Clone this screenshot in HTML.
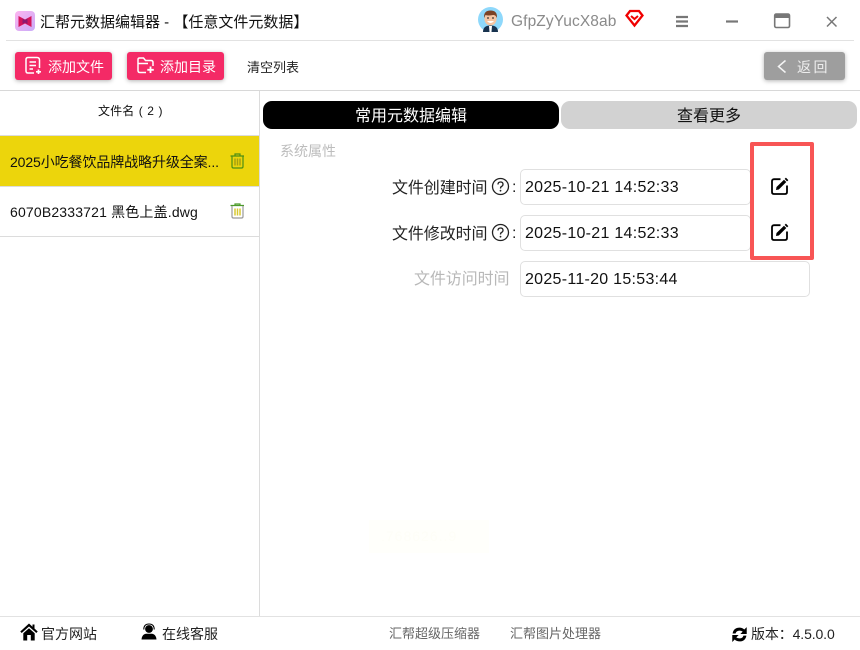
<!DOCTYPE html>
<html lang="zh">
<head>
<meta charset="utf-8">
<style>
*{box-sizing:border-box;margin:0;padding:0}
html,body{width:860px;height:650px;overflow:hidden;background:#fff}
body{position:relative;font-family:"Liberation Sans","Noto Sans CJK SC",sans-serif;color:#111}
.a{position:absolute;white-space:nowrap;line-height:20px}
.line{position:absolute;background:#dcdcdc}
.btn{position:absolute;top:52px;height:28px;background:#f42a66;border-radius:3px;box-shadow:0 1px 4px rgba(0,0,0,.3);color:#fff;font-size:14px;line-height:30px}
.btn span{position:absolute;left:33px;white-space:nowrap}
.btn svg{position:absolute;left:9px;top:4px}
.input{position:absolute;left:520px;height:36px;border:1px solid #e0e0e0;border-radius:5px;font-size:16px;line-height:36px;padding-left:4px;color:#111;background:#fff;letter-spacing:.28px}
</style>
</head>
<body>
<!-- title bar -->
<svg class="a" style="left:15px;top:11px" width="20" height="20" viewBox="0 0 20 20">
<defs><linearGradient id="g" x1="0" y1="0" x2="1" y2="1"><stop offset="0" stop-color="#fdb4f0"/><stop offset="1" stop-color="#c9abf8"/></linearGradient></defs>
<rect width="20" height="20" rx="4" fill="url(#g)"/>
<path d="M3.500 5L10 8.500L16.500 5V16L10 12.500L3.500 16Z" fill="#d4145a"/>
<path d="M7.500 7.500L10 9L12.500 7.500V13L10 11.500L7.500 13Z" fill="#8a1a70"/>
</svg>
<div class="a" style="left:40px;top:13px;font-size:15px;color:#111">汇帮元数据编辑器 - 【任意文件元数据】</div>

<svg class="a" style="left:478px;top:7px" width="25" height="25" viewBox="0 0 25 25">
<circle cx="12.500" cy="12.500" r="12.500" fill="#8ed8fb"/>
<path d="M5 25Q5 18.500 12.500 18.500T20 25Z" fill="#17324f"/>
<path d="M11 19h3l-.5 6h-2z" fill="#fff"/>
<ellipse cx="12.500" cy="12" rx="6" ry="6.500" fill="#f5c5a3"/>
<path d="M6 11Q5.500 3.500 12.500 3.500T19 11Q17.500 7.500 15 8Q10 9 7.500 8Z" fill="#7a4326"/>
<path d="M9 14Q12.500 18 16 14Z" fill="#fff"/>
<circle cx="10" cy="11" r=".9" fill="#333"/><circle cx="15" cy="11" r=".9" fill="#333"/>
</svg>
<div class="a" style="left:511px;top:12px;font-size:15.500px;color:#8a8a8a;letter-spacing:.1px">GfpZyYucX8ab</div>
<svg class="a" style="left:625px;top:9px" width="19" height="19" viewBox="0 0 19 19">
<path d="M5 2H14L17.500 6.500L9.500 16.500L1.500 6.500Z" fill="none" stroke="#f00000" stroke-width="2.300"/>
<path d="M6 7L9.500 10L13 7" fill="none" stroke="#f00000" stroke-width="2"/>
</svg>
<svg class="a" style="left:675px;top:15px" width="14" height="13"><path d="M1 2H13M1 6.500H13M1 11H13" stroke="#777" stroke-width="2.200"/></svg>
<svg class="a" style="left:725px;top:15px" width="14" height="13"><path d="M1 6.500H13" stroke="#777" stroke-width="2.200"/></svg>
<svg class="a" style="left:773px;top:13px" width="18" height="16" viewBox="0 0 18 16"><rect x="1.700" y="1" width="14.800" height="13.500" rx="1.500" fill="#fff" stroke="#777" stroke-width="1.600"/><rect x="1.500" y="1" width="15" height="4" fill="#777"/></svg>
<svg class="a" style="left:825px;top:15px" width="13" height="13"><path d="M2 2L11.500 11.500M11.500 2L2 11.500" stroke="#777" stroke-width="1.500"/></svg>

<div class="line" style="left:6px;top:40px;width:848px;height:1px;background:#e2e2e2"></div>

<!-- toolbar -->
<div class="btn" style="left:15px;width:97px">
<svg width="20" height="20" viewBox="0 0 20 20" fill="none" stroke="#fff" stroke-width="1.500"><path d="M10 17H4Q2 17 2 15V3.500Q2 1.500 4 1.500H13Q15.500 1.500 15.500 4V12"/><path d="M5.500 6H12M5.500 9.500H12M5.500 13H9"/><path d="M14.500 13.500V18M12 15.800H17" stroke-width="1.700"/></svg>
<span>添加文件</span></div>
<div class="btn" style="left:127px;width:97px">
<svg width="20" height="20" viewBox="0 0 20 20" fill="none" stroke="#fff" stroke-width="1.500"><path d="M10 16.500H4Q2 16.500 2 14.500V3.500Q2 2 3.500 2H7.500L9.500 4.500H15Q17 4.500 17 6.500V10"/><path d="M2 7.500H12"/><path d="M14.500 10.500V17M11.300 13.800H17.800" stroke-width="1.800"/></svg>
<span>添加目录</span></div>
<div class="a" style="left:247px;top:57px;font-size:13px;line-height:21px;color:#222">清空列表</div>

<div class="btn" style="left:764px;width:81px;background:#9e9e9e;color:#eee">
<svg style="left:12px;top:7px" width="12" height="15"><path d="M9.500 1.500L2.500 7.500L9.500 13.500" fill="none" stroke="#f4f4f4" stroke-width="1.500"/></svg>
<span style="left:33px;letter-spacing:2.500px">返回</span></div>

<div class="line" style="left:0;top:90px;width:860px;height:1px;background:#d8d8d8"></div>

<!-- sidebar -->
<div class="line" style="left:259px;top:91px;width:1px;height:525px;background:#dcdcdc"></div>
<div class="a" style="left:98px;top:101px;font-size:12px;color:#111;word-spacing:1px;letter-spacing:.1px">文件名 ( 2 )</div>
<div class="line" style="left:0;top:135px;width:259px;height:1px;background:#dcdcdc"></div>
<div class="a" style="left:0;top:136px;width:259px;height:50px;background:#ecd50c"></div>
<div class="a" style="left:10px;top:152px;font-size:14px;color:#111;width:212px;overflow:hidden;letter-spacing:-.1px">2025小吃餐饮品牌战略升级全案...</div>
<svg class="a" style="left:230px;top:153px" width="15" height="16" viewBox="0 0 15 16" fill="none" stroke="#4c8f14" stroke-width="1.200"><path d="M.5 3H14M5 3V1H10V3"/><path d="M2 3V13.500Q2 15 3.500 15H11.500Q13 15 13 13.500V3"/><path d="M5 5.500V12.500M7.500 5.500V12.500M10 5.500V12.500" stroke="#a8a010" stroke-width="1.500"/></svg>
<div class="line" style="left:0;top:186px;width:259px;height:1px;background:#dcdcdc"></div>
<div class="a" style="left:10px;top:202px;font-size:14px;color:#111;letter-spacing:.17px">6070B2333721 黑色上盖.dwg</div>
<svg class="a" style="left:230px;top:203px" width="15" height="16" viewBox="0 0 15 16" fill="none" stroke="#4c9a2a" stroke-width="1.200"><path d="M.5 2.500H14M5 2.500V1H10V2.500"/><path d="M2 3V13.500Q2 15 3.500 15H11.500Q13 15 13 13.500V3" stroke="#999"/><path d="M5 5.500V12.500M7.500 5.500V12.500M10 5.500V12.500" stroke="#d8c930" stroke-width="1.500"/></svg>
<div class="line" style="left:0;top:236px;width:259px;height:1px;background:#dcdcdc"></div>

<!-- tabs -->
<div class="a" style="left:263px;top:101px;width:296px;height:28px;background:#000;border-radius:9px;color:#fff;text-align:center;line-height:31px;font-size:16px">常用元数据编辑</div>
<div class="a" style="left:561px;top:101px;width:296px;height:28px;background:#d2d2d2;border-radius:9px;color:#111;text-align:center;line-height:31px;font-size:16px">查看更多</div>

<!-- form -->
<div class="a" style="left:280px;top:141px;font-size:14px;color:#bdbdbd">系统属性</div>

<div class="a" style="left:392px;top:179px;font-size:16px;letter-spacing:-.1px;color:#222">文件创建时间</div>
<svg class="a" style="left:491px;top:177px" width="19" height="19" viewBox="0 0 19 19"><circle cx="9.500" cy="9.500" r="8" fill="none" stroke="#222" stroke-width="1.300"/><path d="M7 7.500Q7 5 9.500 5T12 7.300Q12 8.800 10.500 9.500Q9.500 10 9.500 11.500" fill="none" stroke="#222" stroke-width="1.300"/><circle cx="9.500" cy="13.700" r=".9" fill="#222"/></svg>
<div class="a" style="left:512px;top:178px;font-size:16px;color:#222">:</div>
<div class="input" style="top:169px;width:231px">2025-10-21 14:52:33</div>

<div class="a" style="left:392px;top:225px;font-size:16px;letter-spacing:-.1px;color:#222">文件修改时间</div>
<svg class="a" style="left:491px;top:223px" width="19" height="19" viewBox="0 0 19 19"><circle cx="9.500" cy="9.500" r="8" fill="none" stroke="#222" stroke-width="1.300"/><path d="M7 7.500Q7 5 9.500 5T12 7.300Q12 8.800 10.500 9.500Q9.500 10 9.500 11.500" fill="none" stroke="#222" stroke-width="1.300"/><circle cx="9.500" cy="13.700" r=".9" fill="#222"/></svg>
<div class="a" style="left:512px;top:224px;font-size:16px;color:#222">:</div>
<div class="input" style="top:215px;width:231px">2025-10-21 14:52:33</div>

<div class="a" style="left:414px;top:270px;font-size:16px;letter-spacing:-.1px;color:#b8b8b8">文件访问时间</div>
<div class="input" style="top:261px;width:290px">2025-11-20 15:53:44</div>

<!-- red highlight -->
<div class="a" style="left:750px;top:142px;width:64px;height:118px;border:4px solid #f85555;border-radius:2px;background:#fff"></div>
<svg class="a" style="left:771px;top:177px" width="18" height="18" viewBox="0 0 18 18"><path d="M9.500 2.200H3Q1 2.200 1 4.200V15Q1 17 3 17H14Q16 17 16 15V8.500" fill="none" stroke="#000" stroke-width="1.800"/><path d="M5 13L5.500 10L13 2.700L15.300 5L7.800 12.500Z" fill="#000"/><path d="M14.300 1.300L16.700 3.700" stroke="#000" stroke-width="1.800"/></svg>
<svg class="a" style="left:771px;top:223px" width="18" height="18" viewBox="0 0 18 18"><path d="M9.500 2.200H3Q1 2.200 1 4.200V15Q1 17 3 17H14Q16 17 16 15V8.500" fill="none" stroke="#000" stroke-width="1.800"/><path d="M5 13L5.500 10L13 2.700L15.300 5L7.800 12.500Z" fill="#000"/><path d="M14.300 1.300L16.700 3.700" stroke="#000" stroke-width="1.800"/></svg>

<!-- faint watermark -->
<div class="a" style="left:369px;top:520px;width:120px;height:33px;background:#fffffb;color:#fefef7;font-size:14px;line-height:33px;padding-left:12px;letter-spacing:1px">.768626..9</div>

<!-- footer -->
<div class="line" style="left:0;top:616px;width:860px;height:1px;background:#e2e2e2"></div>
<svg class="a" style="left:20px;top:623px" width="18" height="18" viewBox="0 0 18 18"><path d="M9 .5L.3 8.500L1.700 10L9 3.500L16.300 10L17.700 8.500L14.500 5.500V1.500H12.500V3.700Z" fill="#000"/><path d="M3.300 10.300L9 5.300L14.700 10.300V17.500H10.800V12H7.200V17.500H3.300Z" fill="#000"/></svg>
<div class="a" style="left:41px;top:624px;font-size:14px;color:#222">官方网站</div>
<svg class="a" style="left:141px;top:623px" width="16" height="17" viewBox="0 0 16 17"><circle cx="8" cy="6" r="3.900" fill="#000"/><path d="M2.800 6.500Q2.800 1 8 1T13.200 6.500" fill="none" stroke="#000" stroke-width="1.100"/><path d="M.5 16.500Q1 11.300 5 10.800H11Q15 11.300 15.500 16.500Z" fill="#000"/></svg>
<div class="a" style="left:162px;top:624px;font-size:14px;color:#222">在线客服</div>
<div class="a" style="left:389px;top:624px;font-size:13px;color:#666">汇帮超级压缩器</div>
<div class="a" style="left:510px;top:624px;font-size:13px;color:#666">汇帮图片处理器</div>
<svg class="a" style="left:731px;top:626px" width="17" height="17" viewBox="0 0 16 16"><path d="M1.500 7Q2.500 1.500 8 1.500Q10.800 1.500 12.500 3.300L14.800 1V7.500H8.800L11 5.300Q9.800 4.300 8 4.300Q5 4.400 4.300 7Z" fill="#000"/><path d="M14.500 9Q13.500 14.500 8 14.500Q5.200 14.500 3.500 12.700L1.200 15V8.500H7.200L5 10.700Q6.200 11.700 8 11.700Q11 11.600 11.700 9Z" fill="#000"/></svg>
<div class="a" style="left:751px;top:624px;font-size:14px;color:#222;letter-spacing:-.12px">版本：4.5.0.0</div>
</body>
</html>
